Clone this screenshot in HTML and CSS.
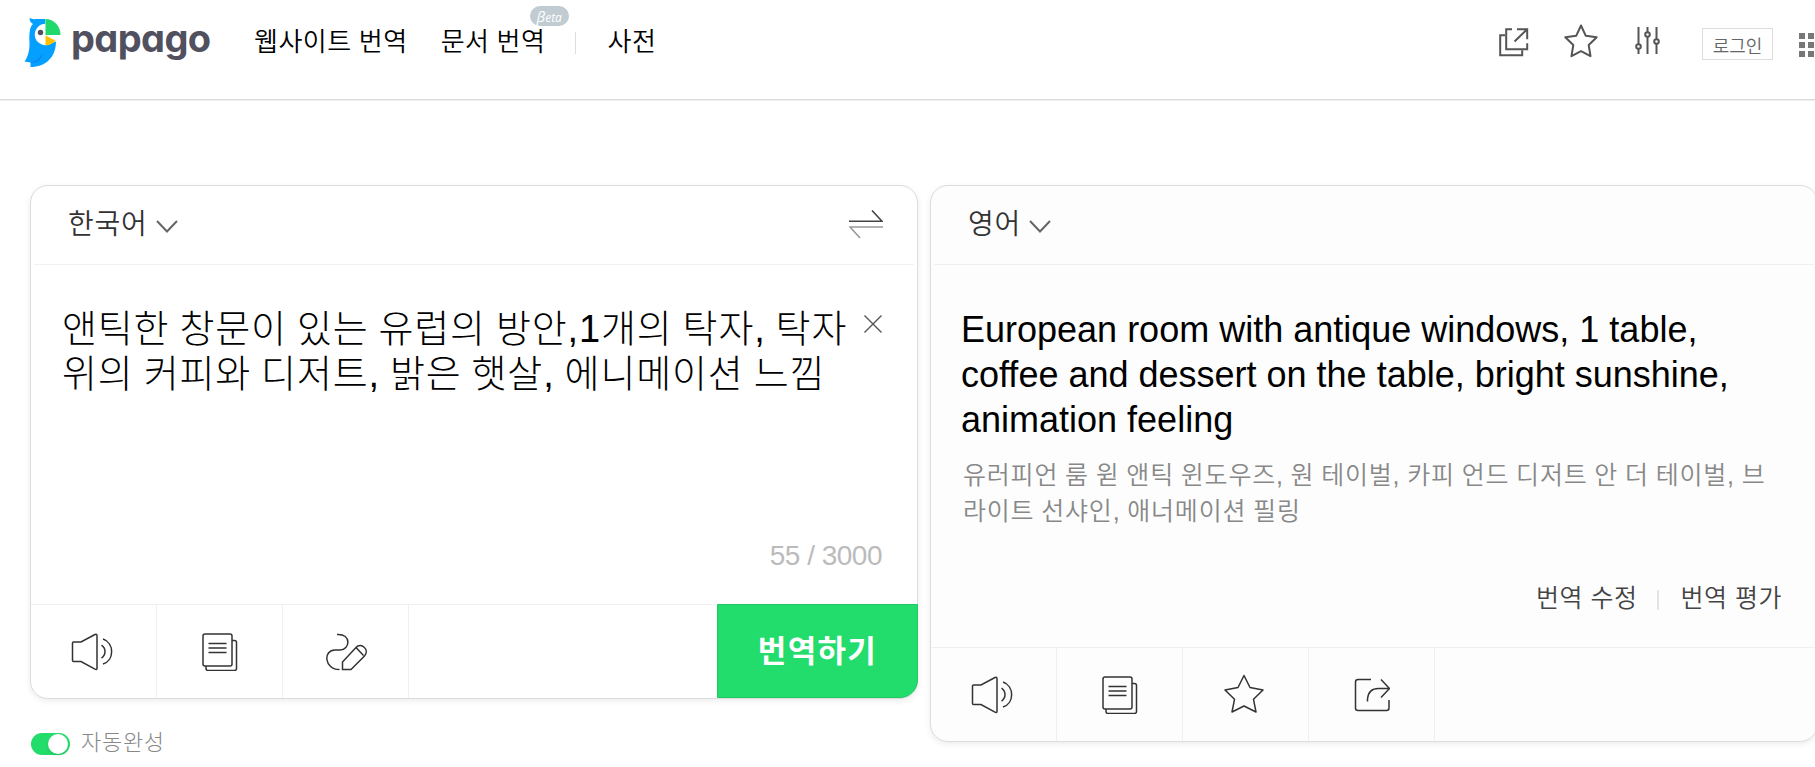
FILE: index.html
```html
<!DOCTYPE html>
<html lang="ko">
<head>
	<meta charset="UTF-8">
	<title>papago</title>
	<link rel="stylesheet" href="styles.css">
</head>
<body>
	<div class="header">
		<a class="logo" href="#">
			<svg class="bird" width="38" height="50" viewBox="0 0 38 50">
				<path fill="#05a0ff" d="M5.500 0 Q8 1.500 12 1 H21.500 V27 L32 23.500 C32 39 22 49 6.500 49 L6.500 44.500 L0.500 43.500 C4.500 38 5.500 32 5.500 25 C5 16 5.500 9 9 6 C6.500 4.500 5.500 2.500 5.500 0z"/>
				<path fill="#0787fa" d="M18.500 34.500 C16.500 40 12 43.500 6.500 44.500 C14 45.500 18.500 41 18.500 34.500z"/>
				<circle cx="21.500" cy="16.500" r="10.700" fill="#fff"/>
				<path fill="#fff" d="M21.500 0 H38 V20 L31.500 23 L21.500 18z"/>
				<circle cx="16.500" cy="14.500" r="2.700" fill="#51505f"/>
				<path fill="#20d86b" d="M21.500 1 C30 1 36.500 8 36.500 17 H21.500z"/>
				<path fill="#ffc000" d="M21.500 17.500 L31.500 22.500 C29 25.500 26 27.300 21.500 27.300z"/>
			</svg>
			<span class="word">papago</span>
		</a>
		<div class="nav">
			<a href="#">웹사이트 번역</a>
			<a class="doc" href="#">문서 번역<em class="beta"><i>β</i>eta</em></a>
			<a class="dic" href="#">사전</a>
		</div>
		<div class="util">
			<svg class="copy" width="30" height="30" viewBox="0 0 30 30"><path d="M6 7.200H1.200v20h22v-5"/><path d="M13 1.200H7.200v20h21v-6M18 1.200h10.200v10M28 1.500 15.500 13.500"/></svg>
			<svg class="star" width="34" height="34" viewBox="0 0 34 34"><path stroke-linejoin="round" d="M17 1.500l4.700 10.200 11 1.500-8 7.800 1.800 11.200-9.500-5-9.500 5 1.800-11.200-8-7.800 11-1.500z"/></svg>
			<svg class="sliders" width="26" height="28" viewBox="0 0 26 28"><path d="M3.500 0v17M3.500 22v5M12.500 0v5M12.500 10v17M21.500 0v12M21.500 17v10"/><circle cx="3.500" cy="19.500" r="2.300"/><circle cx="12.500" cy="7.500" r="2.300"/><circle cx="21.500" cy="14.500" r="2.300"/></svg>
			<a class="login" href="#">로그인</a>
			<svg class="apps" width="24" height="24" viewBox="0 0 24 24"><path d="M0 0h6v6H0zM9 0h6v6H9zM18 0h6v6h-6zM0 9h6v6H0zM9 9h6v6H9zM18 9h6v6h-6zM0 18h6v6H0zM9 18h6v6H9zM18 18h6v6h-6z"/></svg>
		</div>
	</div>

	<div class="container">
		<div class="left">
			<div class="panel">
				<div class="lang">
					<p>한국어</p>
					<svg class="arrow" width="22" height="13" viewBox="0 0 22 13"><path d="M1 1l10 10.500L21 1"/></svg>
					<svg class="swap" width="34" height="29" viewBox="0 0 34 29"><path d="M0 11.300h33L23 .500"/><path class="pale" d="M34 17H1l10 11"/></svg>
				</div>
				<div class="source">
					<p class="txt">앤틱한 창문이 있는 유럽의 방안,1개의 탁자, 탁자<br>위의 커피와 디저트, 밝은 햇살, 에니메이션 느낌</p>
					<svg class="close" width="18" height="18" viewBox="0 0 18 18"><path d="M.500.500l17 17M17.500.500l-17 17"/></svg>
					<p class="count">55 / 3000</p>
				</div>
				<div class="tools">
					<span><svg class="sound" width="42" height="38" viewBox="0 0 42 38"><path d="M1.500 10Q1.500 9 2.500 9H10L24 1.500Q26 .700 26 2.500V35.500Q26 37.200 24 36.200L10 28.500H2.500Q1.500 28.500 1.500 27.500zM30.500 12a7.800 7.800 0 0 1 0 13M32 6c11.500 4 11.500 21.500 0 25"/></svg></span>
					<span><svg width="36" height="38" viewBox="0 0 36 38"><rect x="1" y="1" width="29" height="32" rx="2"/><path d="M30 7.500h2.500q2 0 2 2v26q0 2-2 2H6q-2 0-2-2V33M6.500 10.500h18M6.500 15h18M6.500 19.500h18"/></svg></span>
					<span><svg width="42" height="38" viewBox="0 0 42 38"><path d="M12 1.500c15-1 13 15.500 3 15.500h-5c-12 0-11 19.500 4.500 19.500M17.500 36.500v-7.500L31 14.500c5-5.500 14 2 8.500 8.500L26 36.500zM31 14.500l7.500 8"/></svg></span>
					<button>번역하기</button>
				</div>
			</div>
			<div class="auto">
				<i class="toggle"></i>
				<p>자동완성</p>
			</div>
		</div>

		<div class="panel target">
			<div class="lang">
				<p>영어</p>
				<svg class="arrow" width="22" height="13" viewBox="0 0 22 13"><path d="M1 1l10 10.500L21 1"/></svg>
			</div>
			<div class="result">
				<p class="en">European room with antique windows, 1 table,<br>coffee and dessert on the table, bright sunshine,<br>animation feeling</p>
				<p class="pron">유러피언 룸 윋 앤틱 윈도우즈, 원 테이벌, 카피 언드 디저트 안 더 테이벌, 브<br>라이트 선샤인, 애너메이션 필링</p>
				<div class="edit">
					<a href="#">번역 수정</a>
					<a href="#">번역 평가</a>
				</div>
			</div>
			<div class="tools">
				<span><svg class="sound" width="42" height="38" viewBox="0 0 42 38"><path d="M1.500 10Q1.500 9 2.500 9H10L24 1.500Q26 .700 26 2.500V35.500Q26 37.200 24 36.200L10 28.500H2.500Q1.500 28.500 1.500 27.500zM30.500 12a7.800 7.800 0 0 1 0 13M32 6c11.500 4 11.500 21.500 0 25"/></svg></span>
				<span><svg width="36" height="38" viewBox="0 0 36 38"><rect x="1" y="1" width="29" height="32" rx="2"/><path d="M30 7.500h2.500q2 0 2 2v26q0 2-2 2H6q-2 0-2-2V33M6.500 10.500h18M6.500 15h18M6.500 19.500h18"/></svg></span>
				<span><svg class="fav" width="40" height="40" viewBox="0 0 40 40"><path stroke-linejoin="round" d="M20 1.500l6 12 13 2.500-9.500 9.300 2.500 12.700-12-6-12 6 2.500-12.700L1 16l13-2.500z"/></svg></span>
				<span><svg width="36" height="34" viewBox="0 0 36 34"><path d="M17 1.500H4q-2.500 0-2.500 2.500v26q0 2.500 2.500 2.500h28.500q2.500 0 2.500-2.500v-8M13.500 23.500v-2.500q1-10.500 11-10.500H35M27 1.500l8.500 9L27 19.500"/></svg></span>
			</div>
		</div>
	</div>
</body>
</html>
```

FILE: styles.css
```css
*{margin: 0;padding: 0;box-sizing: border-box;}
body{background: #fff;overflow: hidden;font-family: "Liberation Sans","Noto Sans CJK KR",sans-serif;font-weight: 350;white-space: nowrap;}
a{color: inherit;text-decoration: none;}
em,i{font-style: normal;}
svg{display: block;fill: none;flex: none;}

.header{height: 100px;border-bottom: 1px solid #dcdcdc;box-shadow: 0 1px 0 #eee;display: flex;align-items: flex-start;padding-left: 24px;}
.logo{display: flex;padding-top: 18px;width: 230px;}
.logo .word{font: 700 38px/50px Inter,sans-serif;font-feature-settings: "cv11";color: #51505f;margin-left: 9px;margin-top: -5px;letter-spacing: -0.6px;}
.nav{display: flex;padding-top: 22px;font-size: 26px;line-height: 40px;letter-spacing: 0.5px;word-spacing: -0.6px;color: #000;}
.nav .doc{margin-left: 33px;padding-right: 31px;position: relative;}
.nav .doc:after{content: "";position: absolute;right: 0;top: 10px;width: 1px;height: 22px;background: #ddd;}
.nav .dic{margin-left: 31px;}
.beta{position: absolute;left: 89px;top: -16px;width: 39px;height: 20px;border-radius: 10px;background: #c0ccd2;color: #fff;font: italic 400 12px/20px "Open Sans",sans-serif;text-align: center;letter-spacing: 0;}
.beta i{font-size: 15px;font-style: italic;}

.util{display: flex;align-items: flex-start;margin-left: auto;padding: 24px 0 0;width: 316px;}
.util svg{stroke: #555;stroke-width: 2;}
.util .copy{margin-top: 4px;}
.util .star{margin-left: 35px;}
.util .sliders{margin: 3px 0 0 37px;}
.util .login{flex: none;width: 71px;height: 32px;margin: 4px 0 0 41px;border: 1px solid #ddd;font-size: 18px;line-height: 36px;text-align: center;color: #666;}
.util .apps{margin: 9px 0 0 26px;fill: #777;stroke: none;}

.container{display: flex;align-items: flex-start;gap: 12px;padding: 85px 0 0 30px;}
.left,.panel{width: 888px;flex: none;}
.panel{border: 1px solid #dcdcdc;border-radius: 18px;background: #fff;box-shadow: 0 2px 6px rgba(0,0,0,.08);}
.lang{height: 79px;margin: 0 3px;padding: 0 31px 6px 34px;border-bottom: 1px solid #f0f0f0;display: flex;align-items: center;font-size: 28px;letter-spacing: 0.800px;color: #333;}
.lang .arrow{margin: 9px 0 0 8px;stroke: #666;stroke-width: 2;}
.lang .swap{margin: 4px 0 0 auto;stroke: #444;stroke-width: 1.600;}
.lang .swap .pale{stroke: #999;}

.source{height: 339px;padding: 42px 35px 0 31px;display: flex;flex-wrap: wrap;justify-content: space-between;align-content: space-between;}
.source .txt{font-size: 38px;font-weight: 300;line-height: 45px;letter-spacing: 0.850px;word-spacing: -1.400px;color: #000;}
.source .close{margin-top: 8px;stroke: #555;stroke-width: 1.400;}
.source .count{width: 100%;font-size: 28px;line-height: 40px;letter-spacing: -0.500px;color: #bbb;text-align: right;margin-bottom: 28px;}

.tools{height: 94px;border-top: 1px solid #f0f0f0;display: flex;}
.tools span{width: 126px;border-right: 1px solid #f0f0f0;display: flex;align-items: center;justify-content: center;}
.tools svg{stroke: #333;stroke-width: 1.500;}
.tools .sound{margin-right: 3px;}
.tools .fav{margin: 0 3px 2px 0;}
.tools button{width: 201px;height: 94px;margin: -1px -1px -1px auto;padding-bottom: 5px;border: 1px solid #1fc862;border-bottom-right-radius: 18px;background: #22dc6c;color: #fff;font: 700 31px/1 "Noto Sans CJK KR",sans-serif;letter-spacing: 1.300px;}

.auto{display: flex;align-items: center;padding: 28px 0 0 1px;font-size: 22px;font-weight: 300;line-height: 32px;letter-spacing: 0.700px;color: #888;}
.toggle{width: 39px;height: 22px;border-radius: 11px;background: #22dc6c;padding: 1px 1px 0 17px;margin-right: 11px;margin-top: 1px;}
.toggle:after{content: "";display: block;width: 20px;height: 20px;border-radius: 50%;background: #fff;box-shadow: 0 2px 3px rgba(0,0,0,.1);}

.target{background: #fdfdfd;}
.result{height: 382px;padding: 42px 35px 0 30px;}
.result .en{font-size: 36px;line-height: 45px;color: #000;}
.result .pron{margin: 15px 0 0 2px;font-size: 25px;line-height: 36px;letter-spacing: 0.800px;word-spacing: -0.900px;color: #888;}
.edit{display: flex;justify-content: flex-end;margin-top: 49px;font-size: 25px;line-height: 40px;letter-spacing: 0.500px;color: #444;}
.edit a + a{margin-left: 19px;display: flex;align-items: center;}
.edit a + a:before{content: "";width: 2px;height: 20px;margin: 4px 22px 0 0;background: #e4e4e4;}
```
